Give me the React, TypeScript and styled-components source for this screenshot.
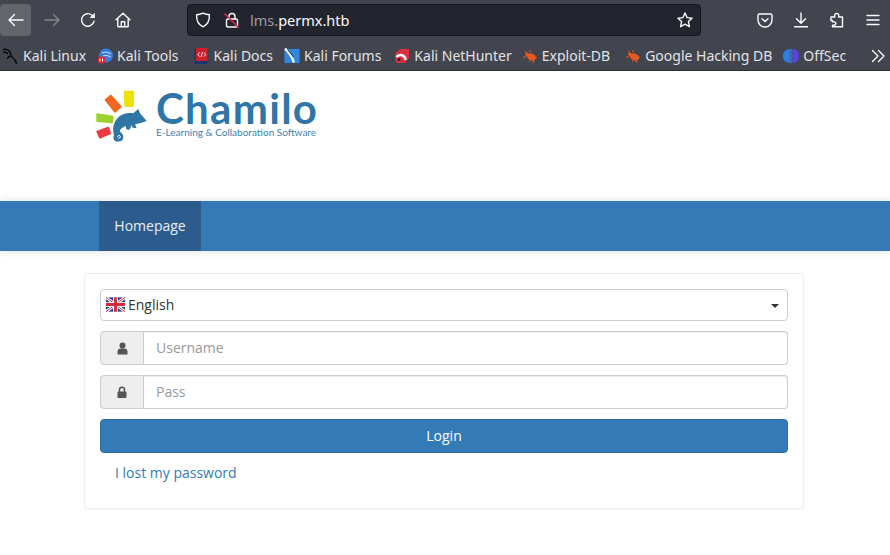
import React from 'react';
import styled, { createGlobalStyle } from 'styled-components';

const GlobalStyle = createGlobalStyle`
  html, body {
    margin: 0;
    padding: 0;
    background: #fff;
    overflow: hidden;
  }
  * { box-sizing: border-box; }
`;

const Page = styled.div`
  width: 890px;
  height: 555px;
  overflow: hidden;
  font-family: 'Open Sans', sans-serif;
  font-size: 14px;
  color: #333;
  background: #fff;
`;

/* browser chrome */
const Chrome = styled.div`
  height: 71px;
  background: #42454e;
  border-bottom: 1px solid #2b2c33;
  font-family: 'Noto Sans', sans-serif;
`;

const Toolbar = styled.div`
  height: 41px;
  padding: 4px 0 0 0;
  display: flex;
  align-items: flex-start;
`;

const NavButton = styled.div<{ $active?: boolean; $left?: number }>`
  width: 31px;
  height: 32px;
  margin-left: ${p => p.$left ?? 0}px;
  border-radius: 4px;
  background: ${p => (p.$active ? '#63656d' : 'transparent')};
  display: flex;
  align-items: center;
  justify-content: center;
  flex-shrink: 0;
`;

const UrlBar = styled.div`
  width: 514px;
  height: 32px;
  margin-left: 49px;
  background: #23252e;
  border: 1px solid #17181d;
  border-radius: 4px;
  display: flex;
  align-items: center;
  gap: 13px;
  padding: 0 7px 0 7px;
  flex-shrink: 0;
`;

const UrlText = styled.div`
  flex: 1;
  margin-left: -3px;
  font-size: 14.5px;
  color: #fbfbfe;
  white-space: nowrap;
`;

const UrlDim = styled.span`
  color: #9b9ca3;
`;

const ToolIcons = styled.div`
  display: flex;
  margin-left: 48px;
  gap: 4px;
`;

const ToolButton = styled.div`
  width: 32px;
  height: 32px;
  display: flex;
  align-items: center;
  justify-content: center;
`;

const Bookmarks = styled.div`
  height: 29px;
  position: relative;
  display: flex;
  align-items: center;
  padding-left: 3px;
`;

const Bookmark = styled.div<{ $gap: number }>`
  display: flex;
  align-items: center;
  gap: 4px;
  margin-right: ${p => p.$gap}px;
  font-size: 14px;
  color: #e3e3e7;
  white-space: nowrap;
`;

const MoreButton = styled.div`
  position: absolute;
  right: 5px;
  top: 7px;
`;

/* page header */
const Header = styled.header`
  height: 130px;
  padding: 19px 0 0 96px;
`;

const Logo = styled.div`
  display: flex;
  align-items: flex-start;
  gap: 2px;
`;

const LogoWords = styled.div`
  display: flex;
  flex-direction: column;
`;

const LogoName = styled.div`
  font-family: 'Lato', sans-serif;
  font-size: 42px;
  line-height: 36px;
  height: 37px;
  font-weight: 700;
  color: #2f75a6;
  letter-spacing: 1.3px;
`;

const LogoTagline = styled.div`
  font-family: 'Lato', sans-serif;
  font-size: 10px;
  line-height: 10px;
  color: #3d7fb0;
  white-space: nowrap;
`;

const Navbar = styled.nav`
  height: 50px;
  background: #337ab7;
  padding-left: 99px;
  display: flex;
  box-shadow: 0 0 8px rgba(0, 0, 0, 0.14);
`;

const NavTab = styled.a`
  width: 102px;
  background: #2c5c8e;
  color: #e8eef5;
  display: flex;
  align-items: center;
  justify-content: center;
  padding-bottom: 2px;
  font-size: 14px;
`;

/* login card */
const Main = styled.main`
  padding: 22px 0 0 84px;
`;

const Card = styled.section`
  width: 720px;
  height: 236px;
  border: 1px solid #eeeeee;
  border-radius: 4px;
  box-shadow: 0 1px 2px rgba(0, 0, 0, 0.05);
  padding: 15px;
  display: flex;
  flex-direction: column;
`;

const LangSelect = styled.div`
  height: 32px;
  border: 1px solid #cccccc;
  border-radius: 4px;
  display: flex;
  align-items: center;
  padding: 0 8px 2px 5px;
  gap: 3px;
  margin-bottom: 10px;
  color: #333;
  font-size: 14px;
`;

const LangLabel = styled.span`
  flex: 1;
`;

const Caret = styled.span`
  width: 0;
  height: 0;
  border-left: 4px solid transparent;
  border-right: 4px solid transparent;
  border-top: 4px solid #333;
  margin-top: 4px;
`;

const InputGroup = styled.div`
  height: 34px;
  display: flex;
  margin-bottom: 10px;
`;

const Addon = styled.div`
  width: 44px;
  background: #eeeeee;
  border: 1px solid #cccccc;
  border-radius: 4px 0 0 4px;
  display: flex;
  align-items: center;
  justify-content: center;
`;

const TextInput = styled.div`
  flex: 1;
  border: 1px solid #cccccc;
  border-left: 0;
  border-radius: 0 4px 4px 0;
  box-shadow: inset 0 1px 1px rgba(0, 0, 0, 0.075);
  display: flex;
  align-items: center;
  padding: 0 0 2px 12px;
  color: #999999;
  font-size: 14px;
`;

const LoginButton = styled.div`
  height: 34px;
  background: #337ab7;
  border: 1px solid #2e6da4;
  border-radius: 4px;
  color: #fff;
  display: flex;
  align-items: center;
  justify-content: center;
  padding-bottom: 2px;
  font-size: 14px;
`;

const LostLink = styled.a`
  margin: 10px 0 0 15px;
  line-height: 20px;
  color: #337ab7;
  font-size: 14px;
`;

/* drawings */
const strokeProps = {
  fill: 'none',
  stroke: '#fbfbfe',
  strokeWidth: 1.4,
  strokeLinecap: 'round' as const,
  strokeLinejoin: 'round' as const,
};

const BackIcon = ({ dim }: { dim?: boolean }) => (
  <svg width="16" height="16" viewBox="0 0 16 16" {...strokeProps} stroke={dim ? '#85878d' : '#fbfbfe'}>
    {dim ? <path d="M1 8h14M9.500 2.500 15 8l-5.500 5.500" /> : <path d="M15 8H1M6.500 2.500 1 8l5.500 5.500" />}
  </svg>
);

const ReloadIcon = () => (
  <svg width="16" height="16" viewBox="0 0 16 16" {...strokeProps}>
    <path d="M14 9.300A6.300 6.300 0 1 1 11.800 3L14 5.200" />
    <path d="M14.800 .8v5.200H9.600Z" fill="#fbfbfe" stroke="none" />
  </svg>
);

const HomeIcon = () => (
  <svg width="16" height="16" viewBox="0 0 16 16" {...strokeProps}>
    <path d="M1 7.800 8 1.200l7 6.600M2.800 6.500V14a.8.8 0 0 0 .8.8h8.800a.8.8 0 0 0 .8-.8V6.500" />
    <path d="M6.300 14.600V9.800h3.400v4.800" />
  </svg>
);

const ShieldIcon = () => (
  <svg width="16" height="16" viewBox="0 0 16 16" {...strokeProps}>
    <path d="M8 1.200c2.200 1 4.400 1.500 6.400 1.600.2 5.800-1.800 10-6.400 12-4.600-2-6.600-6.200-6.400-12C3.600 2.700 5.800 2.200 8 1.200Z" />
  </svg>
);

const BrokenLockIcon = () => (
  <svg width="16" height="16" viewBox="0 0 16 16" {...strokeProps}>
    <path d="M5 7V4.500a3 3 0 0 1 6 0V7" />
    <rect x="2.500" y="7" width="11" height="8" rx="1.500" />
    <path d="M1 2 14.500 15.500" stroke="#e22850" strokeWidth="1.500" />
  </svg>
);

const StarIcon = () => (
  <svg width="16" height="16" viewBox="0 0 16 16" {...strokeProps}>
    <path d="M8 1 10.100 5.600 15 6.200 11.400 9.600 12.400 14.700 8 12.200 3.600 14.700 4.600 9.600 1 6.200 5.900 5.600Z" />
  </svg>
);

const PocketIcon = () => (
  <svg width="16" height="16" viewBox="0 0 16 16" {...strokeProps}>
    <path d="M2.500 2h11A1.500 1.500 0 0 1 15 3.500V8a7 7 0 0 1-14 0V3.500A1.500 1.500 0 0 1 2.500 2Z" />
    <path d="M5 6.800 8 9.500l3-2.700" />
  </svg>
);

const DownloadIcon = () => (
  <svg width="16" height="16" viewBox="0 0 16 16" {...strokeProps}>
    <path d="M8 1v10M3.500 6.800 8 11.200l4.500-4.400M1.500 14.800h13" />
  </svg>
);

const PuzzleIcon = () => (
  <svg width="16" height="16" viewBox="0 0 16 16" {...strokeProps}>
    <path d="M2 5h3.700V3.400a2 2 0 0 1 4 0V5h3.800v9.800H3.500v-1.500H5.200a1.700 1.700 0 0 0 0-3.400H3.500V8.500L2 8.500Z" />
  </svg>
);

const MenuIcon = () => (
  <svg width="16" height="16" viewBox="0 0 16 16" {...strokeProps}>
    <path d="M2 3.500h12M2 8h12M2 12.500h12" />
  </svg>
);

const ChevronsIcon = () => (
  <svg width="14" height="14" viewBox="0 0 14 14" {...strokeProps}>
    <path d="M1.500 1.500 7 7l-5.500 5.500M7.500 1.500 13 7l-5.500 5.500" />
  </svg>
);

const KaliDragon = () => (
  <svg width="16" height="16" viewBox="0 0 16 16" fill="none" stroke="#08080a" strokeWidth="1.500" strokeLinecap="round">
    <path d="M0 1.500c2.500-.5 5.500.3 6.800 2 1.400 1.800.3 3.200 1.400 4.700 1 1.300 3.800 2.500 5.300 7" />
    <path d="M.5 4c1.800 0 3 .4 4 1.400M7.500 8c-1.400.3-2.300 1-2.800 2.200" />
  </svg>
);

const KaliTools = () => (
  <svg width="16" height="16" viewBox="0 0 16 16">
    <circle cx="9" cy="7.500" r="7" fill="#367be0" />
    <path d="M5 5c3-1.500 6-1 9 1M6 8c2.500-1 5-.5 8 1" stroke="#cfe2fa" strokeWidth="1" fill="none" />
    <rect x="1" y="8.500" width="7" height="7" rx="2" fill="#e2262c" />
    <path d="M3 10.500v3M5.500 10.500v3" stroke="#fff" strokeWidth="1" />
  </svg>
);

const KaliDocs = () => (
  <svg width="16" height="16" viewBox="0 0 16 16">
    <rect x="0.500" y="0" width="13" height="16" fill="#16366f" />
    <rect x="2" y="0" width="11.500" height="13" fill="#cf1f2a" />
    <path d="M5.500 4.500 3.800 6.500l1.700 2M10 4.500l1.700 2-1.700 2M8.500 4 7 9" stroke="#fff" strokeWidth="0.900" fill="none" />
  </svg>
);

const KaliForums = () => (
  <svg width="16" height="16" viewBox="0 0 16 16">
    <rect x="0.500" y="1" width="15" height="14" fill="#2f88e6" />
    <path d="M1 .5c3.500 3 6.500 7 9 14" stroke="#f2f4f7" strokeWidth="2.400" fill="none" />
    <path d="M3.500 1.500 9.500 9" stroke="#1a1a20" strokeWidth="0.900" fill="none" />
  </svg>
);

const KaliHunter = () => (
  <svg width="16" height="16" viewBox="0 0 16 16">
    <path d="M6 1h9v9l-4 5H3L1 12V6Z" fill="#de2f3f" />
    <path d="M2.500 9a5 5 0 0 1 9 3" stroke="#fff" strokeWidth="2.400" fill="none" />
    <circle cx="5" cy="11.500" r="1.600" fill="#22242a" />
  </svg>
);

const BugIcon = () => (
  <svg width="16" height="16" viewBox="0 0 16 16">
    <ellipse cx="9.500" cy="9" rx="4.500" ry="3.400" fill="#e9591c" transform="rotate(25 9.500 9)" />
    <circle cx="5" cy="6.500" r="1.800" fill="#e9591c" />
    <path d="M1 9h3M3 3l2.500 2.500M7 4 9 2M7 14l2-2.500M11 15l1-2.500M15 9l-2 1" stroke="#e9591c" strokeWidth="1" fill="none" />
  </svg>
);

const OffSecIcon = () => (
  <svg width="16" height="16" viewBox="0 0 16 16">
    <path d="M6.800 1A7 7 0 0 0 6.800 15Z" fill="#2f7fe0" />
    <path d="M9.200 1A7 7 0 0 1 9.200 15Z" fill="#5a45d8" />
    <rect x="7.500" y="0.500" width="1" height="15" fill="#1d9fe8" />
  </svg>
);

const ChamiloMark = () => (
  <svg width="58" height="52" viewBox="0 0 58 52">
    <path d="M9.700 10 14.700 5.700 24.700 16.700 19 21.700Z" fill="#f1681d" stroke="#f1681d" strokeWidth="2" strokeLinejoin="round" />
    <path d="M28.700 1.700 37.300 1.700 36.700 16 29.300 16Z" fill="#efdf0a" stroke="#efdf0a" strokeWidth="2" strokeLinejoin="round" />
    <path d="M1.300 24.300 16.700 26.700 16 32.300 1.300 31Z" fill="#9cd22c" stroke="#9cd22c" strokeWidth="2" strokeLinejoin="round" />
    <path d="M1.300 41.700 12.300 37.700 14 43.300 4 47.700Z" fill="#ea3b40" stroke="#ea3b40" strokeWidth="2" strokeLinejoin="round" />
    <path
      d="M18 45C16.500 40 17 36 18.500 33 20 29 25 24 30.700 23.300 33 23 35 23 37.300 23.300L42.300 19 44 23.300 50.700 31 44 33.300 39 34.300 40.700 38.300 36.700 37.700 35.700 35 33.300 40 30 39 30 35.700 25.700 38.300C24 39 24 41 24 41.700 26 43 27.300 45 27.300 46.700 27.300 49 26 51 24.700 51 22 52 19.500 51.500 19.300 51 17.500 50 17 47 18 45Z"
      fill="#2f75a6"
    />
    <path d="M21.500 46.500c.5-1.500 2.500-1.500 2.800 0 .2 1.300-1 2-2 1.600" fill="none" stroke="#fff" strokeWidth="1" strokeLinecap="round" />
  </svg>
);

const UkFlag = () => (
  <svg width="19" height="15" viewBox="0 0 20 15">
    <rect width="20" height="15" fill="#2b3f87" />
    <path d="M0 0 20 15M20 0 0 15" stroke="#fff" strokeWidth="3" />
    <path d="M0 0 20 15M20 0 0 15" stroke="#cf2b3b" strokeWidth="1" />
    <path d="M10 0v15M0 7.500h20" stroke="#fff" strokeWidth="5" />
    <path d="M10 0v15M0 7.500h20" stroke="#cf2b3b" strokeWidth="3" />
  </svg>
);

const UserGlyph = () => (
  <svg width="11" height="13" viewBox="0 0 11 13" fill="#555555">
    <circle cx="5.500" cy="3.400" r="3" />
    <path d="M0.500 12.500V9.500c0-2 1.500-3 2.800-3h4.400c1.300 0 2.800 1 2.800 3v3Z" />
  </svg>
);

const LockGlyph = () => (
  <svg width="10" height="12" viewBox="0 0 10 12">
    <path d="M2.500 6V3.800a2.500 2.500 0 0 1 5 0V6" fill="none" stroke="#555555" strokeWidth="1.500" />
    <rect x="0.500" y="5.500" width="9" height="6.500" rx="1" fill="#555555" />
  </svg>
);

const bookmarks = [
  { label: 'Kali Linux', icon: <KaliDragon />, gap: 11 },
  { label: 'Kali Tools', icon: <KaliTools />, gap: 15 },
  { label: 'Kali Docs', icon: <KaliDocs />, gap: 11 },
  { label: 'Kali Forums', icon: <KaliForums />, gap: 13 },
  { label: 'Kali NetHunter', icon: <KaliHunter />, gap: 10 },
  { label: 'Exploit-DB', icon: <BugIcon />, gap: 15 },
  { label: 'Google Hacking DB', icon: <BugIcon />, gap: 11 },
  { label: 'OffSec', icon: <OffSecIcon />, gap: 0 },
];

export default function App() {
  return (
    <Page>
      <GlobalStyle />
      <Chrome>
        <Toolbar>
          <NavButton $active><BackIcon /></NavButton>
          <NavButton $left={5}><BackIcon dim /></NavButton>
          <NavButton $left={5}><ReloadIcon /></NavButton>
          <NavButton $left={4}><HomeIcon /></NavButton>
          <UrlBar>
            <ShieldIcon />
            <BrokenLockIcon />
            <UrlText><UrlDim>lms.</UrlDim>permx.htb</UrlText>
            <StarIcon />
          </UrlBar>
          <ToolIcons>
            <ToolButton><PocketIcon /></ToolButton>
            <ToolButton><DownloadIcon /></ToolButton>
            <ToolButton><PuzzleIcon /></ToolButton>
            <ToolButton><MenuIcon /></ToolButton>
          </ToolIcons>
        </Toolbar>
        <Bookmarks>
          {bookmarks.map(b => (
            <Bookmark key={b.label} $gap={b.gap}>
              {b.icon}
              {b.label}
            </Bookmark>
          ))}
          <MoreButton><ChevronsIcon /></MoreButton>
        </Bookmarks>
      </Chrome>
      <Header>
        <Logo>
          <ChamiloMark />
          <LogoWords>
            <LogoName>Chamilo</LogoName>
            <LogoTagline>E-Learning &amp; Collaboration Software</LogoTagline>
          </LogoWords>
        </Logo>
      </Header>
      <Navbar>
        <NavTab>Homepage</NavTab>
      </Navbar>
      <Main>
        <Card>
          <LangSelect>
            <UkFlag />
            <LangLabel>English</LangLabel>
            <Caret />
          </LangSelect>
          <InputGroup>
            <Addon><UserGlyph /></Addon>
            <TextInput>Username</TextInput>
          </InputGroup>
          <InputGroup>
            <Addon><LockGlyph /></Addon>
            <TextInput>Pass</TextInput>
          </InputGroup>
          <LoginButton>Login</LoginButton>
          <LostLink>I lost my password</LostLink>
        </Card>
      </Main>
    </Page>
  );
}
